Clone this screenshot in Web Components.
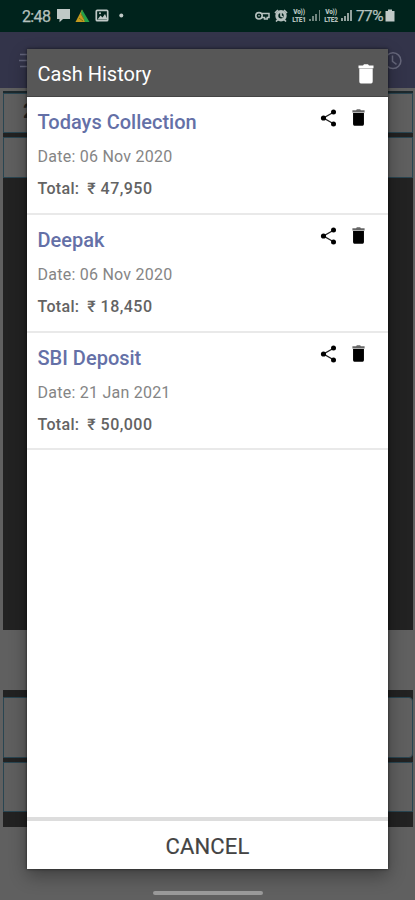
<!DOCTYPE html>
<html lang="en"><head><meta charset="utf-8"><title>Cash History</title>
<style>html,body{margin:0;height:100%;overflow:hidden}body{font-family:Roboto,"Noto Sans",sans-serif}</style></head>
<body><cash-app></cash-app>
<script>
const define=(name,html)=>customElements.define(name,class extends HTMLElement{
  constructor(){super();const t=document.createElement('template');t.innerHTML=html;
    this.attachShadow({mode:'open'}).append(t.content.cloneNode(true));}
});

define('status-bar',`<style>
:host{display:flex;height:32px;box-sizing:border-box;background:#00231c;color:#b5c1be;align-items:center;padding:0 20px 0 22px;font-size:16px}
.time{width:35px;letter-spacing:-.65px;font-size:16px;-webkit-text-stroke:.25px}.right{margin-left:auto;display:flex;align-items:center}
svg{display:block;flex:none}
.lte{display:flex;flex-direction:column;align-items:center;font-size:6.5px;font-weight:900;line-height:8px;width:16px;letter-spacing:-.2px}
.pct{font-size:15.5px;letter-spacing:-.6px;width:28px;margin-left:4px;margin-right:1px;-webkit-text-stroke:.25px}
</style>
<span class="time">2:48</span>
<svg width="75" height="20" viewBox="57 6 75 20"><path fill="#c0c9c7" d="M57 9h13v10h-7l-3.500 3.200V19H57z"/>
<path fill="#c49a1e" d="M82 9.500 75.500 22h9.500l-1-7z"/><path fill="#24a148" d="m82 9.500 7.500 12.500h-4.500l-4-9z"/><path d="m79 18 4 3m-2-7 3 5" stroke="#7b741c"/>
<rect x="96.300" y="10.300" width="11.400" height="10.400" rx="1" fill="none" stroke="#c0c9c7" stroke-width="1.700"/><path fill="#c0c9c7" d="m97.500 19.500 3-4 2 2 2.500-3.500 2.500 5.500z"/><circle cx="100" cy="13.300" r="1" fill="#c0c9c7"/><circle cx="121.300" cy="15.500" r="2" fill="#c0c9c7"/></svg>
<div class="right">
<svg width="36" height="20" viewBox="253 6 36 20" fill="none" stroke="#b5c1be"><circle cx="257" cy="15.800" r="3.200" stroke-width="1.600"/><circle cx="257" cy="15.800" r=".8" fill="#b5c1be" stroke="none"/><path d="M259.800 13.500h7.200v4h-1.800v1.600h-2.700v-1.600h-2.500" stroke-width="1.500"/>
<circle cx="279" cy="15.700" r="4.200" stroke-width="3"/><path d="M279 13v3l2 1M273 13l3-3m6 0 3 3m-11 8.500 2-2m6 0 2 2" stroke-width="1.700"/></svg>
<span class="lte"><span>Vo))</span><span>LTE1</span></span>
<svg width="16" height="20" viewBox="306 6 16 20"><path fill="#71857f" d="M308 19h2v2h-2zm3-3h2v5h-2zm3-2h2v7h-2zm4-4h1v11h-1z"/></svg>
<span class="lte"><span>Vo))</span><span>LTE2</span></span>
<svg width="13" height="20" viewBox="338 6 13 20"><path fill="#93a29e" d="M340 18h2v3h-2zm3-2h2v5h-2zm3-3h2v8h-2zm3-3h2v11h-2z"/></svg>
<span class="pct">77%</span><svg width="10" height="20" viewBox="385 6 10 20"><path fill="#c0c9c7" d="M388 9.500h4v1.500h2.500v10.500h-9V11h2.500z"/></svg></div>`);

define('app-bar',`<style>:host{display:flex;justify-content:space-between;align-items:flex-start;height:56px;box-sizing:border-box;background:#33344a;padding:20px 13px 0 19px}svg{display:block}</style>
<svg width="18" height="18" fill="none" stroke="#62637a" stroke-width="1.300"><path d="M1 2.500h16M0 8.500h16M1 14.500h16"/></svg>
<svg width="18" height="18" fill="none" stroke="#66677b" stroke-width="1.500"><circle cx="9" cy="8.700" r="7.900"/><path d="M8.500 3.500v5.800l4 3"/></svg>`);

define('page-backdrop',`<style>
:host{display:block;height:812px;background:#606060;padding:3px 2px 0 3px;box-sizing:border-box}
.dark{background:#222;box-sizing:border-box}.top{height:539px;border-top:2px solid #1d292d}.gap{height:60px}.bottom{height:137px;padding-top:7px}
.cell{box-sizing:border-box;background:#5f5f5f;border:1px solid #294551}.a{height:40px;padding:5px 0 0 19px;font:700 20px/24px Roboto,sans-serif;color:#222}.b{height:41px;margin-top:4px}
.c{height:61px;border-radius:0 4px 4px 0}.d{height:50px;margin-top:4px}
</style><div class="dark top"><div class="cell a">2</div><div class="cell b"></div></div><div class="gap"></div><div class="dark bottom"><div class="cell c"></div><div class="cell d"></div></div>`);

define('trash-icon',`<style>:host{display:block;width:16px;height:20px}svg{display:block;width:100%;height:100%}.lid{opacity:var(--lid,1)}</style>
<svg viewBox="0 0 16 20" preserveAspectRatio="none" fill="currentColor"><path class="lid" d="M.5 1.500H5L6 .3h4l1 1.200h4.500v2.700H.5z"/><path d="M1.300 4.600h13.400v13q0 2-1.600 2H2.900q-1.600 0-1.600-2z"/></svg>`);
define('share-icon',`<style>:host{display:block;width:17px;height:18px}svg{display:block}</style>
<svg width="17" height="18"><path d="M14 3 3.500 9 14 15" fill="none" stroke="#222" stroke-width="1.400"/><circle cx="13.500" cy="3" r="2.500"/><circle cx="3.500" cy="9" r="2.600"/><circle cx="13.500" cy="15" r="2.500"/></svg>`);

define('history-item',`<style>
:host{display:flex;justify-content:space-between;height:117.800px;box-sizing:border-box;padding:12.200px 23.500px 0 10.500px;border-bottom:2px solid #e9e9e9}
.info{display:flex;flex-direction:column;white-space:pre}.name{font-size:20px;line-height:26px;font-weight:500;color:#6470a7}
.date{font-size:16px;line-height:20px;margin-top:12px;color:#858585;letter-spacing:.24px}.total{font-size:16px;line-height:20px;margin-top:12px;font-weight:500;color:#636363;display:flex;gap:8px;letter-spacing:.3px}
.amount{letter-spacing:.48px}
.tools{display:flex;align-items:flex-start;gap:15px;color:#000}trash-icon{width:13px;height:17px;--lid:.6}
</style><div class="info"><span class="name"><slot name="name"></slot></span><span class="date"><slot name="date"></slot></span><span class="total"><span>Total:</span><span class="amount"><slot name="total"></slot></span></span></div>
<div class="tools"><share-icon></share-icon><trash-icon></trash-icon></div>`);

define('history-dialog',`<style>
:host{display:flex;flex-direction:column;width:361px;height:820px;background:#fff;box-shadow:0 7px 17px #0005,0 0 3px #0009}
header{height:48px;box-sizing:border-box;background:#575757;border-bottom:1px solid #444;color:#fff;display:flex;align-items:center;justify-content:space-between;padding:2px 14px 0 10.500px;font-size:20px}
main{flex:1}footer{height:52px;box-sizing:border-box;border-top:4px solid #ddd;display:flex;align-items:center;justify-content:center;font-size:22px;color:#444;padding-top:2px;letter-spacing:.2px}footer span{-webkit-text-stroke:.2px}
</style><header><span>Cash History</span><trash-icon></trash-icon></header><main><slot></slot></main><footer><span>CANCEL</span></footer>`);

define('cash-app',`<style>
:host{display:block;position:relative;width:415px;height:900px;overflow:hidden}
history-dialog{position:absolute;left:27px;top:49px}.home{position:absolute;left:153px;top:891px;width:110px;height:4px;border-radius:2px;background:#999}
</style><status-bar></status-bar><app-bar></app-bar><page-backdrop></page-backdrop>
<history-dialog>
<history-item><span slot="name">Todays Collection</span><span slot="date">Date: 06 Nov 2020</span><span slot="total">₹ 47,950</span></history-item>
<history-item><span slot="name">Deepak</span><span slot="date">Date: 06 Nov 2020</span><span slot="total">₹ 18,450</span></history-item>
<history-item><span slot="name">SBI Deposit</span><span slot="date">Date: 21 Jan 2021</span><span slot="total">₹ 50,000</span></history-item>
</history-dialog><div class="home"></div>`);
</script></body></html>
